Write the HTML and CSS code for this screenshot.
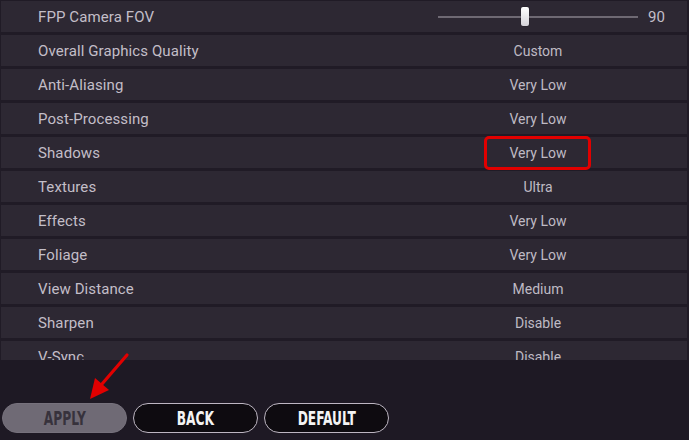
FILE: index.html
```html
<!DOCTYPE html>
<html lang="en">
<head>
    <meta charset="utf-8">
    <title>Graphics Settings</title>
    <link rel="stylesheet" href="styles.css">
</head>
<body>
    <div class="settings">
        <div class="scroll">
            <ul class="list">
                <li class="row">
                    <span class="label">FPP Camera FOV</span>
                    <div class="slider"><i class="track"></i><i class="thumb"></i></div>
                    <span class="num">90</span>
                </li>
                <li class="row"><span class="label">Overall Graphics Quality</span><span class="value">Custom</span></li>
                <li class="row"><span class="label">Anti-Aliasing</span><span class="value">Very Low</span></li>
                <li class="row"><span class="label">Post-Processing</span><span class="value">Very Low</span></li>
                <li class="row"><span class="label">Shadows</span><span class="value mark">Very Low</span></li>
                <li class="row"><span class="label">Textures</span><span class="value">Ultra</span></li>
                <li class="row"><span class="label">Effects</span><span class="value">Very Low</span></li>
                <li class="row"><span class="label">Foliage</span><span class="value">Very Low</span></li>
                <li class="row"><span class="label">View Distance</span><span class="value">Medium</span></li>
                <li class="row"><span class="label">Sharpen</span><span class="value">Disable</span></li>
                <li class="row"><span class="label">V-Sync</span><span class="value">Disable</span></li>
            </ul>
        </div>
        <div class="actions">
            <button class="btn btn-apply"><span>APPLY</span></button>
            <button class="btn"><span>BACK</span></button>
            <button class="btn"><span>DEFAULT</span></button>
            <!-- pointer arrow on APPLY -->
            <svg class="arrow" width="140" height="70" viewBox="0 0 140 70">
                <line x1="127" y1="15" x2="102" y2="44" stroke="#e10000" stroke-width="3.2" stroke-linecap="round"/>
                <polygon points="90,59 109,50 95,38" fill="#e10000"/>
            </svg>
        </div>
    </div>
</body>
</html>
```

FILE: styles.css
```css
*, *::before, *::after { margin:0; padding:0; box-sizing:border-box }
html,body { width:100%; height:100%; background:#1e1924; overflow:hidden }
body { font-family:Roboto, "Liberation Sans", sans-serif }

.settings { width:689px; height:440px; display:flex; flex-direction:column }
.scroll { height:360px; overflow:hidden; background:#201b26 }
.list { list-style:none; display:flex; flex-direction:column; gap:3px; margin:1px 2px 0 1px }

.row { height:31px; flex:none; display:grid; grid-template-columns:400px 200px 1fr; align-items:center;
       padding-left:37px; background:#2d2833; color:#c3bec8; font-size:15px }
.label { letter-spacing:0.1px }
.value { text-align:center; font-size:14px; color:#bfbac4; position:relative }

/* red highlight round the shadows value */
.value.mark::after { content:""; position:absolute; left:46px; top:-9px; width:107px; height:34px;
       border:3px solid #e10000; border-radius:5px }

.slider { position:relative; height:20px; display:flex; align-items:center }
.track { display:block; width:100%; height:2px; background:#6e6973 }
.thumb { position:absolute; left:83px; top:0; width:8px; height:19px; border-radius:2px;
         background:linear-gradient(#ffffff, #d4d2d8); box-shadow:0 0 1px #000 }
.num { padding-left:10px; font-size:15px; color:#c3bec8 }

.actions { flex:1; position:relative; display:flex; gap:6px; padding:43px 0 0 2px }
.btn { width:125px; height:30px; border-radius:15px; border:1.5px solid #bdb6c2; background:#0e0b10;
       color:#f4f4f4; display:flex; align-items:center; justify-content:center;
       font-family:"Liberation Sans Narrow", "DejaVu Sans Condensed", sans-serif; font-weight:bold; font-size:20px }
.btn span { display:inline-block; transform:scaleX(0.68) }
.btn-apply { background:#6f6a75; border-color:#76717c; color:#37323c }
.arrow { position:absolute; left:0; top:-20px }
```
